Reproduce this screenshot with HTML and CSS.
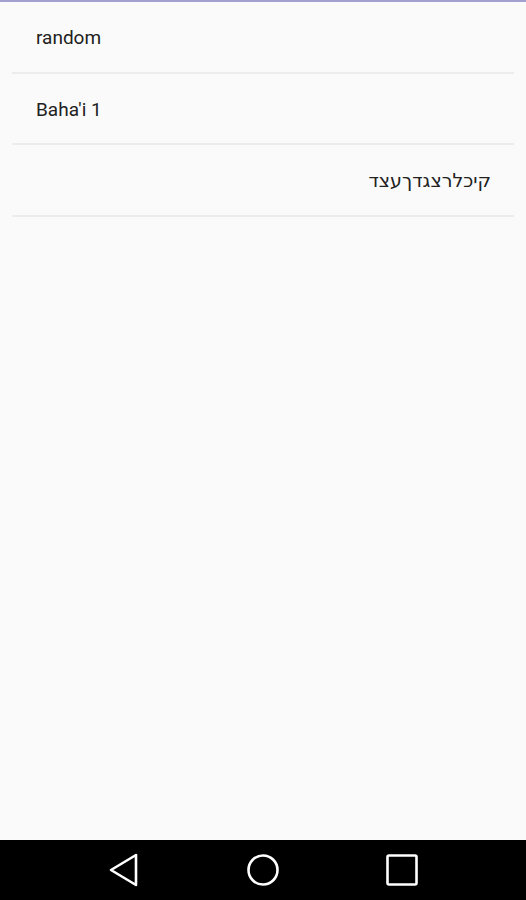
FILE: index.html
```html
<!DOCTYPE html>
<html lang="en">
<head>
    <meta charset="UTF-8">
    <meta name="viewport" content="width=device-width, initial-scale=1.0">
    <title>List</title>
    <link rel="stylesheet" href="styles.css">
</head>
<body>
    <div class="screen">
        <div class="topbar"></div>

        <!-- Lista de itens -->
        <ul class="list">
            <li class="item">random</li>
            <li class="item">Baha'i 1</li>
            <li class="item rtl" dir="rtl">קיכלרצגדךעצד</li>
        </ul>

        <!-- Barra de navegação -->
        <div class="navbar">
            <svg class="nav-icon" width="34" height="34" viewBox="0 0 34 34">
                <path d="M29 2 L29 32 L4 17 Z" fill="none" stroke="#fff" stroke-width="2.6" stroke-linejoin="round"/>
            </svg>
            <svg class="nav-icon" width="34" height="34" viewBox="0 0 34 34">
                <circle cx="17" cy="17" r="14.5" fill="none" stroke="#fff" stroke-width="2.6"/>
            </svg>
            <svg class="nav-icon" width="34" height="34" viewBox="0 0 34 34">
                <rect x="2.5" y="2.5" width="29" height="29" rx="1.5" fill="none" stroke="#fff" stroke-width="2.6"/>
            </svg>
        </div>
    </div>
</body>
</html>
```

FILE: styles.css
```css
* {
    margin: 0;
    padding: 0;
    box-sizing: border-box;
}

body {
    font-family: Roboto, "Noto Sans", "DejaVu Sans", sans-serif;
    background: #fafafa;
    color: #212121;
}

.screen {
    width: 526px;
    height: 900px;
    display: flex;
    flex-direction: column;
}

.topbar {
    height: 2px;
    background: #a3a0cf;
}

.list {
    list-style: none;
    flex: 1;
    padding: 0 12px;
}

.item {
    height: 71.5px;
    padding: 2px 24px 0;
    display: flex;
    align-items: center;
    font-size: 19px;
    border-bottom: 2px solid #ececec;
}

.item.rtl {
    padding: 2px 23px 0;
    font-size: 19px;
}

.navbar {
    height: 60px;
    background: #000;
    display: flex;
    align-items: center;
    justify-content: center;
    gap: 105px;
}

.nav-icon {
    display: block;
}
```
